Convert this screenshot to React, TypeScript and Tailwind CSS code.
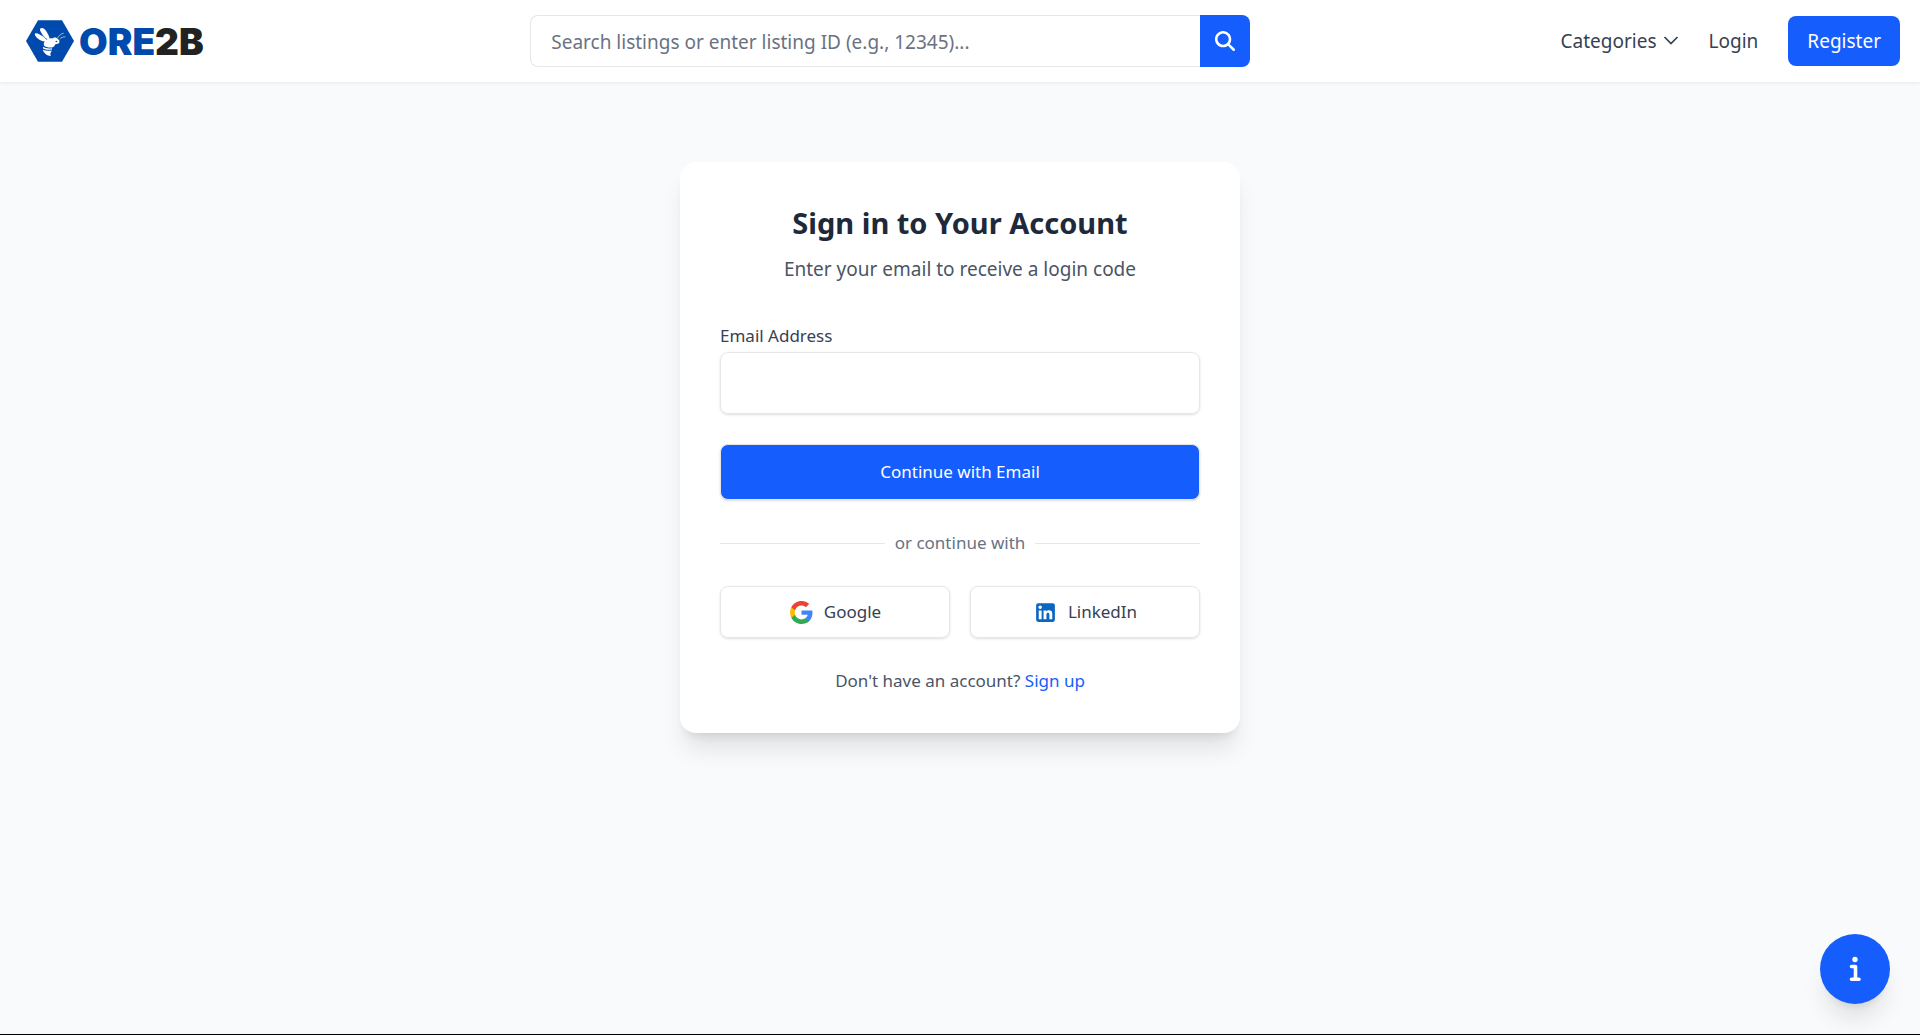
import React, { useState } from "react"
import { FaMagnifyingGlass } from "react-icons/fa6"

const FONT = "font-['Segoe_UI','Noto_Sans',sans-serif]"

function Logo() {
    return (
        <a href="/" aria-label="ORE2B home" className="flex items-center gap-[5px] w-[200px] shrink-0 pl-1.5">
            <svg viewBox="18 18 144 125" className="w-12 h-[42px] shrink-0" aria-hidden="true">
                <polygon points="54,18 126,18 162,80.5 126,143 54,143 18,80.5" fill="#004aad" />
                <g fill="#fff">
                    <path d="M61 43c5-4 13 0 17 7 5 8 9 15 11 23l-6 3c-9-5-16-14-20-22-3-5-4-9-2-11z" />
                    <path d="M45 58c5-3 13 2 21 7 6 4 11 8 14 13l-4 4c-11 0-20-5-26-12-4-5-7-9-5-12z" />
                    <path d="M76 80c4-6 13-9 21-7 4-4 13-4 17 2 4 1 5 6 4 10-2 4-6 5-12 5-2 6-6 9-11 10-8 1-19-1-23-6-2-5 0-10 4-14z" />
                    <path d="M69 98c7 4 17 6 27 4v4c-9 2-20 1-27-3z" />
                    <path d="M68 107c8 3 18 4 27 2-1 4-2 6-4 8l1 9c-10-1-20-8-24-19z" />
                </g>
                <circle cx="109" cy="82" r="2.500" fill="#004aad" />
                <path d="M112 73c3-7 9-13 19-16M119 75c4-5 9-7 17-7" fill="none" stroke="#fff" strokeWidth="1.800" />
            </svg>
            <span className="font-['Inter',sans-serif] font-black text-[37px] leading-none text-[#004aad]">
                ORE<span className="text-[#222]">2B</span>
            </span>
        </a>
    )
}

function GoogleIcon() {
    return (
        <svg viewBox="0 0 24 24" className="w-[25px] h-[25px]" aria-hidden="true">
            <path fill="#4285F4" d="M22.56 12.25c0-.78-.07-1.53-.2-2.25H12v4.26h5.92c-.26 1.37-1.04 2.53-2.21 3.31v2.77h3.57c2.08-1.92 3.28-4.74 3.28-8.09z" />
            <path fill="#34A853" d="M12 23c2.97 0 5.46-.98 7.28-2.66l-3.57-2.77c-.98.66-2.23 1.06-3.71 1.06-2.86 0-5.29-1.93-6.16-4.53H2.18v2.84C3.99 20.53 7.7 23 12 23z" />
            <path fill="#FBBC05" d="M5.84 14.09c-.22-.66-.35-1.36-.35-2.09s.13-1.43.35-2.09V7.07H2.18C1.43 8.55 1 10.22 1 12s.43 3.45 1.18 4.93l3.66-2.84z" />
            <path fill="#EA4335" d="M12 5.38c1.62 0 3.06.56 4.21 1.64l3.15-3.15C17.45 2.09 14.97 1 12 1 7.7 1 3.99 3.47 2.18 7.07l3.66 2.84c.87-2.6 3.3-4.53 6.16-4.53z" />
        </svg>
    )
}

function LinkedInIcon() {
    return (
        <svg viewBox="0 0 24 24" className="w-[25px] h-[25px]" fill="#0A66C2" aria-hidden="true">
            <path d="M19 3a2 2 0 0 1 2 2v14a2 2 0 0 1-2 2H5a2 2 0 0 1-2-2V5a2 2 0 0 1 2-2h14m-.5 15.5v-5.3a3.26 3.26 0 0 0-3.26-3.26c-.85 0-1.84.52-2.32 1.3v-1.11h-2.79v8.37h2.79v-4.93c0-.77.62-1.4 1.39-1.4a1.4 1.4 0 0 1 1.4 1.4v4.93h2.79M6.88 8.56a1.68 1.68 0 0 0 1.68-1.68c0-.93-.75-1.69-1.68-1.69a1.69 1.69 0 0 0-1.69 1.69c0 .93.76 1.68 1.69 1.68m1.39 9.94v-8.37H5.5v8.37h2.77z" />
        </svg>
    )
}

function Header() {
    const [query, setQuery] = useState("")

    return (
        <header className="bg-white shadow-[0_1px_4px_rgba(0,0,0,0.07)] px-5 py-[15px] flex items-center justify-between gap-6">
            <Logo />

            <form onSubmit={(e) => e.preventDefault()} className="flex w-full max-w-[720px] h-[52px]">
                <input
                    type="search"
                    aria-label="Search listings"
                    value={query}
                    onChange={(e) => setQuery(e.target.value)}
                    placeholder="Search listings or enter listing ID (e.g., 12345)..."
                    className="flex-1 min-w-0 border border-r-0 border-gray-200 rounded-l-lg px-5 pt-0.5 text-[19px] text-gray-700 placeholder:text-gray-500 focus:outline-hidden"
                />
                <button type="submit" aria-label="Search" className="w-[50px] bg-blue-600 hover:bg-blue-700 text-white rounded-r-lg flex items-center justify-center">
                    <FaMagnifyingGlass className="w-5 h-5" />
                </button>
            </form>

            <nav className="flex items-center shrink-0 text-[19px] text-gray-700">
                <button type="button" className="flex items-center gap-1.5">
                    Categories
                    <svg viewBox="0 0 16 16" className="w-4 h-4" fill="none" stroke="currentColor" strokeWidth="1.7" aria-hidden="true">
                        <path d="M1.500 4 8 10.500 14.500 4" />
                    </svg>
                </button>
                <a href="/login" className="ml-[30px]">Login</a>
                <a href="/register" className="ml-[30px] h-[50px] px-[19px] rounded-lg bg-blue-600 hover:bg-blue-700 text-white flex items-center">
                    Register
                </a>
            </nav>
        </header>
    )
}

function SignInCard() {
    const [email, setEmail] = useState("")

    return (
        <section className="w-full max-w-[560px] bg-white rounded-2xl shadow-xl p-10">
            <div className="text-center mb-10">
                <h1 className="text-[29px] leading-[42px] font-bold text-gray-800 mb-2.5">Sign in to Your Account</h1>
                <p className="text-[19px] leading-[30px] text-gray-600">Enter your email to receive a login code</p>
            </div>

            <form onSubmit={(e) => e.preventDefault()}>
                <label htmlFor="email" className="block text-[17px] leading-6 text-gray-700 mb-1">Email Address</label>
                <input
                    id="email"
                    type="email"
                    value={email}
                    onChange={(e) => setEmail(e.target.value)}
                    className="block w-full h-[62px] px-4 border border-gray-200 rounded-lg shadow-sm text-[19px] text-gray-700 focus:outline-hidden focus:border-blue-600"
                />
                <button type="submit" className="mt-[30px] w-full h-14 border border-gray-200 rounded-lg shadow-sm bg-blue-600 hover:bg-blue-700 text-[17px] text-white">
                    Continue with Email
                </button>
            </form>

            <div className="flex items-center gap-2.5 my-[30px] text-[17px] leading-[26px] text-gray-500">
                <div className="flex-1 border-t border-gray-200" />
                <span>or continue with</span>
                <div className="flex-1 border-t border-gray-200" />
            </div>

            <div className="grid grid-cols-2 gap-5 text-[17px] text-gray-700">
                <button type="button" className="h-[52px] flex items-center justify-center gap-2.5 border border-gray-200 rounded-lg shadow-sm hover:bg-gray-50">
                    <GoogleIcon />
                    Google
                </button>
                <button type="button" className="h-[52px] flex items-center justify-center gap-2.5 border border-gray-200 rounded-lg shadow-sm hover:bg-gray-50">
                    <LinkedInIcon />
                    LinkedIn
                </button>
            </div>

            <p className="mt-[30px] text-center text-[17px] leading-[25px] text-gray-600">
                Don't have an account? <a href="/register" className="text-blue-600 hover:underline">Sign up</a>
            </p>
        </section>
    )
}

export default function App() {
    return (
        <div className={`${FONT} min-h-screen flex flex-col bg-gray-50`}>
            <Header />
            <main className="flex-1 flex items-start justify-center px-5 py-20">
                <SignInCard />
            </main>
            <footer className="border-t border-black" />

            <button
                type="button"
                aria-label="Information"
                className="fixed right-[30px] bottom-[31px] w-[70px] h-[70px] rounded-full bg-blue-600 hover:bg-blue-700 text-white shadow-xl flex items-center justify-center"
            >
                <svg viewBox="0 0 12 26" className="w-3 h-[26px]" aria-hidden="true">
                    <circle cx="6" cy="3.500" r="2.700" fill="currentColor" />
                    <path d="M2.500 10.500H6.500V23.200M2.500 23.200H10" fill="none" stroke="currentColor" strokeWidth="3.600" strokeLinecap="round" strokeLinejoin="round" />
                </svg>
            </button>
        </div>
    )
}
